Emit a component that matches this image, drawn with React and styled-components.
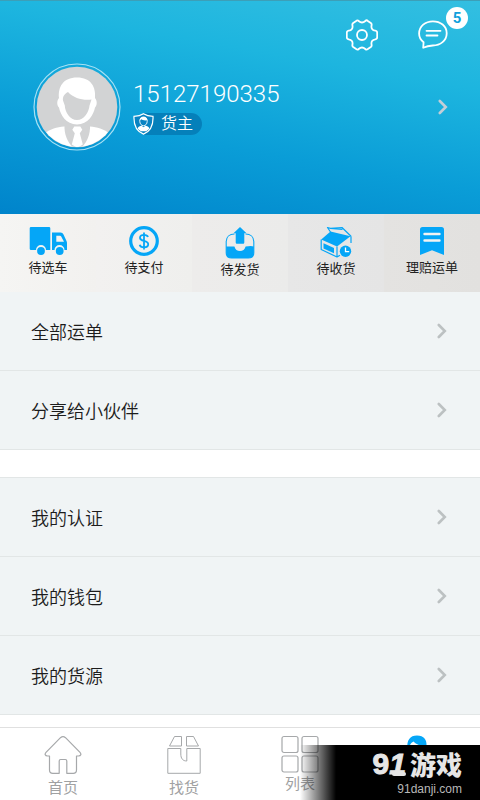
import React from "react";
import styled, { createGlobalStyle } from "styled-components";

const sans = `Roboto, "Noto Sans CJK SC", sans-serif`;
const blue = "#05a6f7";

const GlobalStyle = createGlobalStyle`
  *, *::before, *::after { box-sizing: border-box; }
  body { margin: 0; background: #fff; font-family: ${sans}; }
  button { margin: 0; padding: 0; border: 0; background: none; font: inherit; color: inherit; cursor: pointer; }
  a { color: inherit; text-decoration: none; }
  svg { display: block; flex: none; }
`;

const Page = styled.div`
  display: flex;
  flex-direction: column;
  min-height: 100vh;
`;

const Header = styled.header`
  display: flex;
  flex-direction: column;
  gap: 12px;
  padding: 18px 32px 63px 33px;
  border-top: 1px solid #3c9fb8;
  background: linear-gradient(190deg, #33bfe1 0%, #1db5df 30%, #0a9dd7 64%, #0084cb 100%);
`;

const Tools = styled.div`
  display: flex;
  justify-content: flex-end;
  gap: 38px;
`;

const ToolButton = styled.button`
  position: relative;
  width: 32px;
  height: 32px;
`;

const Badge = styled.span`
  position: absolute;
  top: -12px;
  right: -20px;
  width: 22px;
  height: 22px;
  border-radius: 50%;
  background: #fff;
  color: #0f9fdc;
  font-size: 15px;
  font-weight: 700;
  line-height: 23px;
  text-align: center;
`;

const Profile = styled.a`
  display: flex;
  align-items: center;
  gap: 12px;
  color: #fff;
`;

const Identity = styled.div`
  flex: 1;
  display: flex;
  flex-direction: column;
  align-items: flex-start;
  gap: 4px;
`;

const Phone = styled.span`
  font-size: 24px;
  font-weight: 300;
  line-height: 30px;
`;

const Role = styled.span`
  display: flex;
  align-items: center;
  height: 22px;
  padding-right: 9px;
  gap: 7px;
  border-radius: 11px;
  background: linear-gradient(90deg, transparent 11px, #0580ba 11px);
  font-size: 16px;
  font-weight: 350;
  line-height: 22px;
`;

const Actions = styled.nav`
  display: grid;
  grid-template-columns: repeat(5, 1fr);
  height: 78px;
`;

const Action = styled.a`
  display: flex;
  flex-direction: column;
  align-items: center;
  gap: ${(p) => p.$gap || 2}px;
  padding-top: 12px;
  background: linear-gradient(90deg, ${(p) => p.$from}, ${(p) => p.$to});
  color: #222;
  font-size: 13px;
  line-height: 20px;
`;

const Group = styled.section`
  display: flex;
  flex-direction: column;
  margin-bottom: ${(p) => (p.$last ? 12 : 27)}px;
  border-top: ${(p) => (p.$ruled ? "1px solid #e2e6e6" : "0")};
  background: #f0f4f5;
`;

const Row = styled.a`
  display: flex;
  align-items: center;
  justify-content: space-between;
  height: 79px;
  padding: 0 33px 0 31px;
  border-bottom: 1px solid #e2e6e6;
  color: #1c1c1c;
  font-family: "Noto Sans CJK SC", sans-serif;
  font-size: 18px;
  font-weight: 350;
  line-height: 26px;
`;

const TabBar = styled.nav`
  position: relative;
  flex: 1;
  display: grid;
  grid-template-columns: 126fr 116fr 116fr 122fr;
  min-height: 73px;
  border-top: 1px solid #e0e0e0;
  background: #fff;
`;

const Tab = styled.a`
  display: flex;
  flex-direction: column;
  align-items: center;
  gap: ${(p) => (p.$tight ? 0 : 2)}px;
  padding-top: 7px;
  padding-right: ${(p) => (p.$inset ? 4 : 0)}px;
  color: #a0a1a2;
  font-size: 15px;
  line-height: 22px;
`;

const Watermark = styled.div`
  position: absolute;
  right: 0;
  bottom: 0;
  display: flex;
  flex-direction: column;
  align-items: flex-end;
  gap: 4px;
  width: 180px;
  height: 55px;
  padding: 5px 18px 0 0;
  background: linear-gradient(90deg, transparent, #000 36px);
  color: #e6e6e6;
`;

const Brand = styled.div`
  display: flex;
  align-items: center;
  gap: 4px;
  font-family: "Noto Sans CJK SC", sans-serif;
  font-size: 26px;
  font-weight: 900;
  line-height: 28px;
`;

const BrandNumber = styled.span`
  position: relative;
  font-family: "Liberation Sans", sans-serif;
  font-size: 30px;
  -webkit-text-stroke: 1px #e6e6e6;

  &::after {
    content: "";
    position: absolute;
    right: 0;
    bottom: 2px;
    width: 14px;
    height: 4px;
    border-radius: 2px;
    background: #e6e6e6;
  }
`;

const Site = styled.div`
  color: #b8b8b8;
  font-family: "Liberation Sans", sans-serif;
  font-size: 12px;
  line-height: 14px;
`;

const Chevron = ({ color = "#bcc1c2" }) => (
  <svg width="10" height="16" viewBox="0 0 10 16" fill="none" stroke={color} strokeWidth="2.600">
    <path d="M1.800 2 7.800 8l-6 6" strokeLinecap="round" />
  </svg>
);

const Gear = () => (
  <svg width="32" height="32" viewBox="0 0 32 32" fill="none" stroke="#fff" strokeWidth="1.800" strokeLinejoin="round">
    <path d="M10.200 1.900C11 1.100 12 1.300 12.700 2c2 1.800 4.600 1.800 6.600 0 .7-.7 1.700-.9 2.500-.1l3 2.100c.8.6 1 1.300.8 2.200-.7 3.100.8 5.200 3.700 5.500 1.200.2 1.900.8 1.900 2v4.600c0 1.200-.7 1.800-1.900 2-2.900.4-4.400 2.600-3.700 5.500.2.9 0 1.600-.8 2.200l-3 2.100c-.8.7-1.800.6-2.500-.1-2-1.900-4.600-1.900-6.600 0-.7.700-1.700.8-2.500.1l-3-2.100c-.8-.6-1-1.300-.8-2.200.7-2.900-.8-5.100-3.700-5.500C1.500 20.100.8 19.500.8 18.300v-4.600c0-1.200.7-1.800 1.900-2 2.900-.3 4.400-2.400 3.700-5.500-.2-.9 0-1.600.8-2.200z" />
    <circle cx="16" cy="16" r="5" />
  </svg>
);

const Chat = () => (
  <svg width="32" height="32" viewBox="0 0 32 32" fill="none" stroke="#fff" strokeWidth="1.800" strokeLinecap="round" strokeLinejoin="round">
    <path d="M7.200 28.700 7.600 23.300C4.900 21.300 3.100 18.200 3.100 14.600 3.100 7 9.400 2.300 16.900 2.300S30.700 7 30.700 14.200c0 7.400-6.400 12.300-13.900 12.300-3.600.2-6.500.8-9.600 2.200z" />
    <path d="M10.500 11.800h14M10.500 16.500h11" />
  </svg>
);

const Avatar = () => (
  <svg width="88" height="88" viewBox="0 0 88 88">
    <defs>
      <clipPath id="face"><circle cx="44" cy="44" r="40" /></clipPath>
    </defs>
    <circle cx="44" cy="44" r="43" fill="none" stroke="#a7e1f4" strokeWidth="1.200" />
    <circle cx="44" cy="44" r="40.300" fill="#d2d3d4" />
    <g clipPath="url(#face)">
      <path fill="#fff" d="M12 70c5-4 12-6 19-6.600h26c7 .6 14 2.600 19 6.600l-5 18H17z" />
      <path fill="#d2d3d4" d="M31.500 62.500h25.500c.5 8-3 17-8 21.500h-9.500c-5-4.500-8.500-13.500-8-21.500z" />
      <path fill="#fff" d="M41.300 63.400h6l2 3.300-2.500 3.500 3 11.200L44.300 85l-5.500-3.600 3-11.200-2.500-3.500z" />
      <path fill="#fff" fillRule="evenodd" d="M26 35c-1-11 4-20.500 18-20.500S63 24 62 35c2 2 2.600 7 0 9.500-1.300 7-7 17-18 17s-16.700-10-18-17c-2.600-2.500-2-7.500 0-9.500zm9-6c-4 2-5.500 5-5 8.500l1.800 5C32 49 37 57 44 57s12-8 12.500-14.500l2-6C50 37.500 41 35.500 35 29z" />
    </g>
  </svg>
);

const Shield = () => (
  <svg width="21" height="22" viewBox="0 0 21 22">
    <path d="M10.500.8C8 2.500 4.500 3.300 1 3.300c-.4 8 2.300 15 9.500 17.800C17.700 18.300 20.400 11.300 20 3.300 16.500 3.300 13 2.500 10.500.8z" fill="#0983c2" stroke="#fff" strokeWidth="1.200" />
    <path d="M10.500 4.500c3 0 4 1.700 3.700 4-.2 2.400-1.500 4.200-3.700 4.200S7 10.900 6.800 8.500c-.3-2.300.7-4 3.700-4z" fill="none" stroke="#fff" strokeWidth=".9" />
    <path d="M6.900 7.300c-.5-5 7.700-5 7.200 0-2.500.4-4.800-.1-5.700-1zM4.600 15.600c.7-2.100 2.300-2.700 4.100-2.900l1.800 1.600 1.800-1.600c1.800.2 3.400.8 4.100 2.900-1 1-2 2-3.300 2.600H8c-1.400-.6-2.400-1.600-3.400-2.600z" fill="#fff" />
  </svg>
);

const Truck = () => (
  <svg width="38" height="30" viewBox="0 0 38 30">
    <path fill={blue} d="M2 1h18a1.300 1.300 0 0 1 1.300 1.300V24H17a5 5 0 0 0-10 0H2A1.300 1.300 0 0 1 .7 22.700V2.300A1.300 1.300 0 0 1 2 1z" />
    <path fill={blue} fillRule="evenodd" d="M23 6.500h8.500c1.600 0 2.300.7 3 2.100l3 6.500c.3.600.5 1.200.5 1.900V24h-2.500a5 5 0 0 0-10 0H23zm4.300 3.300v6H35l-2.800-5.200c-.3-.6-.6-.8-1.200-.8z" />
    <circle fill={blue} cx="12" cy="25" r="3.900" /><circle fill={blue} cx="30.700" cy="25" r="3.900" />
  </svg>
);

const Dollar = () => (
  <svg width="30" height="30" viewBox="0 0 30 30" fill="none" stroke={blue}>
    <circle cx="15" cy="15" r="13.300" strokeWidth="3.200" />
    <path d="M19 11c-.5-1.600-2-2.200-4-2.200-2.200 0-4 .9-4 2.900 0 4.600 8.200 1.800 8.200 6.600 0 2-1.800 3-4.100 3s-4-.8-4.400-2.600M15 6.500v17" strokeWidth="1.800" />
  </svg>
);

const Outbox = () => (
  <svg width="30" height="33" viewBox="0 0 30 33">
    <path fill="none" stroke={blue} strokeWidth="1.100" d="M9.500 8C4.500 8 1.200 11 1.200 15.500v11c0 3.500 2 5.500 5.500 5.500h16.600c3.500 0 5.500-2 5.500-5.500v-11C28.800 11 25.500 8 20.500 8" />
    <path fill={blue} d="M1.200 20.500h8.200c.8 3 2.800 4.500 5.600 4.500s4.800-1.500 5.600-4.500c4-.8 6.500-.8 8.200 0v6c0 3.500-2 5.500-5.500 5.500H6.700c-3.500 0-5.500-2-5.500-5.500zM15 1l6.500 6.200h-2.200v9c0 1-.5 1.500-1.500 1.500h-5.600c-1 0-1.500-.5-1.500-1.500v-9H8.500z" />
  </svg>
);

const Parcel = () => (
  <svg width="32" height="32" viewBox="0 0 32 32">
    <path fill={blue} d="M10.500 5.500 30.500 10.300 17 20.500 1.200 13.500z" />
    <path fill="none" stroke={blue} strokeWidth="1.200" strokeLinejoin="round" d="M10.500 6 7.500 1.500l3 .8 11.500-.8 9 8.700M10.500 2.300l12 1M1.200 13.500v10L17 31V20.500M31 10.200V17M17 31l3-1.800" />
    <path fill={blue} d="M3.500 17.300 14 22v5.300L3.500 22.600z" />
    <circle cx="25.500" cy="25.300" r="5.700" fill={blue} />
    <path d="M25.500 21.500v4.200h3.700" fill="none" stroke="#fff" strokeWidth="1.300" />
  </svg>
);

const Claim = () => (
  <svg width="24" height="30" viewBox="0 0 24 30">
    <path fill={blue} d="M2.500 1h19A2.500 2.500 0 0 1 24 3.500V29l-12-4.800L0 29V3.500A2.500 2.500 0 0 1 2.500 1z" />
    <path d="M4.500 8h15M4.500 14.500h15" stroke="#f3f3f2" strokeWidth="2.400" strokeLinecap="round" />
  </svg>
);

const tabStroke = { fill: "none", stroke: "#a6a8aa", strokeWidth: 1.2, strokeLinejoin: "round" };

const Home = () => (
  <svg width="38" height="40" viewBox="0 0 38 40" {...tabStroke}>
    <path d="M16.500 2.700c1.600-1.400 3.400-1.400 5 0L36 17.300c1.600 1.800.9 3.700-1.500 3.700h-2v14c0 2.200-1.200 3.300-3.300 3.300h-6.400V26c0-1-.5-1.500-1.500-1.500h-4.600c-1 0-1.500.5-1.500 1.500v12.300H8.800c-2.100 0-3.300-1.100-3.300-3.300V21h-2C1.100 21 .4 19.100 2 17.300z" />
  </svg>
);

const Crate = () => (
  <svg width="34" height="40" viewBox="0 0 34 40" {...tabStroke} strokeWidth="1">
    <path d="M7.500 1.500h7V11h-12zM19.500 1.500h7L31.500 11h-12zM.8 13.500h13v5.500c0 4.500 2 7 6 7V13.500h13.400v24.800H.8z" />
  </svg>
);

const Tiles = () => (
  <svg width="38" height="38" viewBox="0 0 38 38" {...tabStroke}>
    <rect x="1" y="1.500" width="16" height="16" rx="2" /><rect x="21" y="1.500" width="16" height="16" rx="2" />
    <rect x="1" y="21" width="16" height="16" rx="2" /><rect x="21" y="21" width="16" height="16" rx="2" />
  </svg>
);

const Person = () => (
  <svg width="38" height="38" viewBox="0 0 38 38">
    <path fill={blue} d="M9.500 14C8.500 5 12 .5 19 .5s10 4.500 9.500 10.500C23 11 18 9.500 15.500 6.500 12.500 8 11.500 10 11.500 14z" />
    <path fill="none" stroke={blue} strokeWidth="2" d="M10.500 13c0 8 3 12 8.500 12s8.500-5 8.500-12M3 37c1-7 6-10 11-11l5 5 5-5c5 1 10 4 11 11" />
  </svg>
);

const actions = [
  { label: "待选车", Icon: Truck, from: "#f5f5f3", to: "#f2f1ef" },
  { label: "待支付", Icon: Dollar, from: "#f2f1f0", to: "#efefed" },
  { label: "待发货", Icon: Outbox, from: "#edeceb", to: "#ebebea", gap: 1 },
  { label: "待收货", Icon: Parcel, from: "#e7e7e7", to: "#e5e5e5", gap: 1 },
  { label: "理赔运单", Icon: Claim, from: "#e4e3e1", to: "#e2e1df" },
];

const groups = [
  ["全部运单", "分享给小伙伴"],
  ["我的认证", "我的钱包", "我的货源"],
];

export default function App() {
  return (
    <Page>
      <GlobalStyle />
      <Header>
        <Tools>
          <ToolButton aria-label="设置"><Gear /></ToolButton>
          <ToolButton aria-label="消息"><Chat /><Badge>5</Badge></ToolButton>
        </Tools>
        <Profile href="#profile">
          <Avatar />
          <Identity>
            <Phone>15127190335</Phone>
            <Role><Shield />货主</Role>
          </Identity>
          <Chevron color="#c3ced8" />
        </Profile>
      </Header>
      <Actions>
        {actions.map(({ label, Icon, from, to, gap }) => (
          <Action key={label} href="#orders" $from={from} $to={to} $gap={gap}>
            <Icon />{label}
          </Action>
        ))}
      </Actions>
      <main>
        {groups.map((rows, i) => (
          <Group key={rows[0]} $ruled={i > 0} $last={i === groups.length - 1}>
            {rows.map((label) => (
              <Row key={label} href="#row">{label}<Chevron /></Row>
            ))}
          </Group>
        ))}
      </main>
      <TabBar>
        <Tab href="#home"><Home />首页</Tab>
        <Tab href="#find"><Crate />找货</Tab>
        <Tab href="#list" $tight><Tiles />列表</Tab>
        <Tab href="#me" aria-label="我的" $inset><Person /></Tab>
        <Watermark>
          <Brand><BrandNumber>9<i>1</i></BrandNumber>游戏</Brand>
          <Site>91danji.com</Site>
        </Watermark>
      </TabBar>
    </Page>
  );
}
